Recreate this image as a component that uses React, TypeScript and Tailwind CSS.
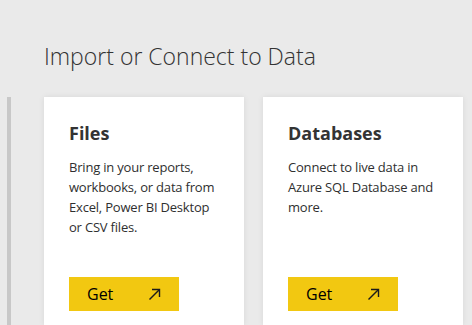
const cards = [
  {
    title: 'Files',
    lines: ['Bring in your reports,', 'workbooks, or data from', 'Excel, Power BI Desktop', 'or CSV files.'],
  },
  {
    title: 'Databases',
    lines: ['Connect to live data in', 'Azure SQL Database and', 'more.'],
  },
];

function ArrowUpRight() {
  return (
    <svg width="13" height="13" viewBox="0 0 13 13" fill="none" stroke="#1b1b1b" strokeWidth="1.4">
      <path d="M1.5 11.5 L11.5 1.5" />
      <path d="M4 1.5 H11.5 V9" />
    </svg>
  );
}

function SourceCard({ title, lines }: { title: string; lines: string[] }) {
  return (
    <div className="flex h-[228px] w-[200px] flex-col bg-white pl-[25px] pr-[12px] pt-[24px] shadow-[0_0_6px_rgba(0,0,0,0.08)]">
      <h2 className="text-[18px] font-bold leading-[24px] text-[#333]">{title}</h2>
      <p className="mt-[12px] text-[13px] leading-[20px] tracking-[-0.2px] text-[#2f2f2f]">
        {lines.map((l) => (
          <span key={l} className="block whitespace-nowrap">
            {l}
          </span>
        ))}
      </p>
      <button className="mb-[14px] mt-auto flex h-[34px] w-[110px] items-center justify-between bg-[#f2c811] pl-[18px] pr-[18px] text-[16px] text-black">
        <span>Get</span>
        <ArrowUpRight />
      </button>
    </div>
  );
}

export default function App() {
  return (
    <div className="h-[325px] w-[472px] overflow-hidden bg-[#eaeaea] font-['Segoe_UI','Open_Sans',sans-serif]">
      <h1 className="pl-[44px] pt-[41px] text-[23px] font-light leading-[30px] text-[#333]">
        Import or Connect to Data
      </h1>
      <div className="mt-[26px] flex">
        <div className="ml-[7px] h-[228px] w-[4px] bg-[#c8c8c8]" />
        <div className="ml-[33px] flex gap-[19px]">
          {cards.map((c) => (
            <SourceCard key={c.title} title={c.title} lines={c.lines} />
          ))}
        </div>
      </div>
    </div>
  );
}
